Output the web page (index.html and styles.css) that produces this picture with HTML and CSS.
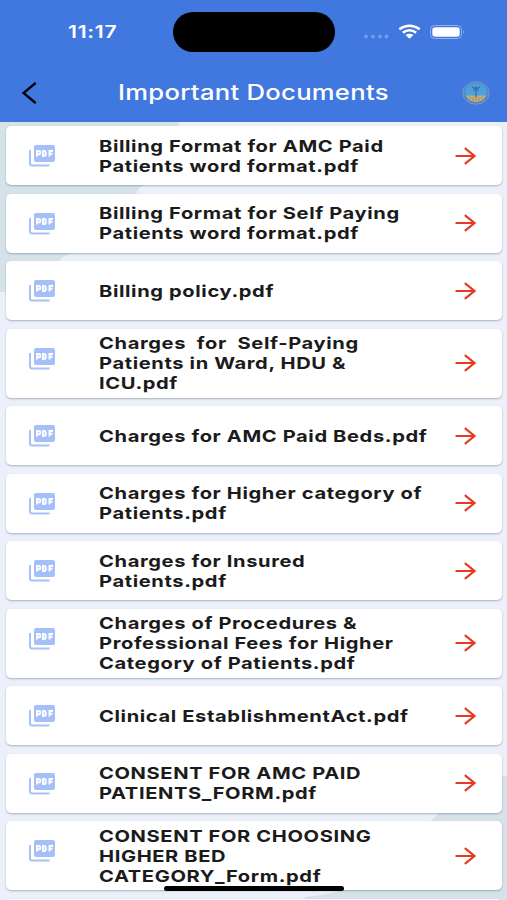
FILE: index.html
```html
<!DOCTYPE html>
<html lang="en">
<head>
<meta charset="utf-8">
<title>Important Documents</title>
<link rel="stylesheet" href="styles.css">
</head>
<body>
<svg class="defs" aria-hidden="true">
  <symbol id="pdf" viewBox="0 0 26 22">
    <path d="M1 5v13.500q0 2 2 2H20.500" fill="none" stroke="#a8c1f8" stroke-width="2"/>
    <rect x="5" width="21" height="17" rx="2" fill="#a5bff8"/>
    <path d="M8 11.500V6h1.700a1.600 1.600 0 0 1 0 3.300H8M14 6v5h1q1.700 0 1.700-1.700V7.700Q16.700 6 15 6zM20.500 11.500V6H24M20.500 8.700h3" fill="none" stroke="#fff" stroke-width="1.900"/>
  </symbol>
  <symbol id="arrow" viewBox="0 0 22 18">
    <path d="M.5 9H20M9.800 1.200L19.500 9l-9.700 7.800" fill="none" stroke="#e63b20" stroke-width="2.200"/>
  </symbol>
</svg>
<div class="screen">
  <header class="top">
    <div class="status">
      <span class="time">11:17</span>
      <span class="island"></span>
      <svg class="signals" viewBox="0 0 104 16">
        <g fill="#759cec"><circle cx="3" cy="12.500" r="2"/><circle cx="10" cy="12.500" r="2"/><circle cx="17" cy="12.500" r="2"/><circle cx="23.500" cy="12.500" r="2"/></g>
        <g fill="none" stroke="#fff" stroke-width="2.500"><path d="M36.300 5.200Q46.500-1.800 56.700 5.200"/><path d="M39.800 8.600Q46.500 4 53.200 8.600"/></g>
        <path d="M42.500 11q4-2.500 8 0l-4 3.700z" fill="#fff"/>
        <rect x="67.500" y="1.500" width="31" height="13" rx="4" fill="none" stroke="#8eaff0"/>
        <rect x="69.300" y="3.200" width="27.400" height="9.600" rx="2.800" fill="#fff"/>
        <path d="M100.300 6q2.300 2 0 4z" fill="#8eaff0"/>
      </svg>
    </div>
    <div class="nav">
      <svg class="back" viewBox="0 0 16 22"><path d="M14 1.500L2.500 11L14 20.500" fill="none" stroke="#000" stroke-width="2.300" stroke-linecap="round"/></svg>
      <h1><span>Important Documents</span></h1>
      <svg class="emblem" viewBox="0 0 28 24">
        <ellipse cx="14" cy="12" rx="13.200" ry="11.200" fill="#4b86d3" stroke="#8495b5"/>
        <ellipse cx="14" cy="11.500" rx="11" ry="9.300" fill="#4ba1dc"/>
        <path d="M4 14.500h20q-2.500 6.500-10 6.500T4 14.500z" fill="#c4aa72"/>
        <path d="M10 6q4 3 8 0M14 5v11M11.500 8.500q2.500 2 5 0" fill="none" stroke="#316fa9" stroke-width="1.300"/>
        <path d="M7 17h14M10 19h8" stroke="#a78e71" stroke-dasharray="2 1"/>
      </svg>
    </div>
  </header>
  <main class="list">
    <svg class="backdrop" viewBox="0 122 507 778" preserveAspectRatio="none"><path d="M0 122H180Q165 165 141 187Q134 193 138 195Q112 200 96 222Q81 253 64 256Q61 258 59 262H6V292H0zM507 776H478Q460 803 440 812Q425 827 405 850Q370 892 305 897V900H507z" fill="#d5e2ea"/></svg>
    <article class="card"><svg class="pdf"><use href="#pdf"/></svg><p class="name">Billing Format for AMC Paid<br>Patients word format.pdf</p><svg class="arrow"><use href="#arrow"/></svg></article>
    <article class="card"><svg class="pdf"><use href="#pdf"/></svg><p class="name">Billing Format for Self Paying<br>Patients word format.pdf</p><svg class="arrow"><use href="#arrow"/></svg></article>
    <article class="card"><svg class="pdf"><use href="#pdf"/></svg><p class="name">Billing policy.pdf</p><svg class="arrow"><use href="#arrow"/></svg></article>
    <article class="card tall"><svg class="pdf"><use href="#pdf"/></svg><p class="name">Charges&nbsp; for&nbsp; Self-Paying<br>Patients in Ward, HDU &amp;<br>ICU.pdf</p><svg class="arrow"><use href="#arrow"/></svg></article>
    <article class="card"><svg class="pdf"><use href="#pdf"/></svg><p class="name">Charges for AMC Paid Beds.pdf</p><svg class="arrow"><use href="#arrow"/></svg></article>
    <article class="card"><svg class="pdf"><use href="#pdf"/></svg><p class="name">Charges for Higher category of<br>Patients.pdf</p><svg class="arrow"><use href="#arrow"/></svg></article>
    <article class="card"><svg class="pdf"><use href="#pdf"/></svg><p class="name">Charges for Insured<br>Patients.pdf</p><svg class="arrow"><use href="#arrow"/></svg></article>
    <article class="card tall"><svg class="pdf"><use href="#pdf"/></svg><p class="name">Charges of Procedures &amp;<br>Professional Fees for Higher<br>Category of Patients.pdf</p><svg class="arrow"><use href="#arrow"/></svg></article>
    <article class="card"><svg class="pdf"><use href="#pdf"/></svg><p class="name">Clinical EstablishmentAct.pdf</p><svg class="arrow"><use href="#arrow"/></svg></article>
    <article class="card"><svg class="pdf"><use href="#pdf"/></svg><p class="name">CONSENT FOR AMC PAID<br>PATIENTS_FORM.pdf</p><svg class="arrow"><use href="#arrow"/></svg></article>
    <article class="card tall"><svg class="pdf"><use href="#pdf"/></svg><p class="name">CONSENT FOR CHOOSING<br>HIGHER BED<br>CATEGORY_Form.pdf</p><svg class="arrow"><use href="#arrow"/></svg></article>
    <article class="card"></article>
  </main>
  <div class="home"></div>
</div>
</body>
</html>
```
FILE: styles.css
```css
* { box-sizing: border-box; }
body { margin: 0; font-family: Inter, "Liberation Sans", sans-serif; }
.defs { position: absolute; width: 0; height: 0; }
.screen { position: relative; width: 507px; height: 900px; overflow: hidden; background: #ebf0fa; }
.top { height: 122px; background: #4178df; color: #fff; }
.status { height: 63px; padding-top: 12px; display: grid; grid-template-columns: 173px 162px 28px 104px; }
.time { margin: 10px 0 0 68px; font-size: 17px; line-height: 20px; font-weight: 600; transform: scaleX(1.24); transform-origin: left; white-space: nowrap; letter-spacing: .6px; }
.island { height: 40px; border-radius: 20px; background: #000; }
.signals { grid-column: 4; width: 104px; height: 16px; margin-top: 12px; }
.nav { height: 59px; padding: 0 17px 0 21px; display: flex; align-items: center; }
.back { width: 16px; height: 22px; }
.nav h1 { flex: 1; margin: 0 0 0 81px; font-size: 21px; line-height: 28px; font-weight: 500; white-space: nowrap; }
.nav h1 span { display: inline-block; transform: scaleX(1.22); transform-origin: left; letter-spacing: .23px; }
.emblem { width: 28px; height: 24px; }
.list { position: relative; padding: 4.300px 5px 0 6px; display: flex; flex-direction: column; gap: 8.500px; }
.backdrop { position: absolute; left: 0; top: 0; width: 507px; height: 778px; }
.card { position: relative; flex: none; height: 59px; padding: 0 25.500px 0 23px; display: flex; align-items: center; background: #fff; border-radius: 5px; box-shadow: 0 1px 2px rgba(70, 85, 100, .4); }
.tall { height: 69px; }
.pdf { width: 26px; height: 22px; align-self: flex-start; margin-top: 19px; }
.name { flex: 1; margin: 0 0 0 44px; width: 280px; font-size: 16.500px; line-height: 20px; font-weight: 650; color: #1b1b1b; white-space: nowrap; transform: scaleX(1.22); transform-origin: left; letter-spacing: .5px; }
.arrow { width: 22px; height: 18px; }
.home { position: absolute; left: 164px; top: 886px; width: 180px; height: 5px; border-radius: 3px; background: #000; }
```
